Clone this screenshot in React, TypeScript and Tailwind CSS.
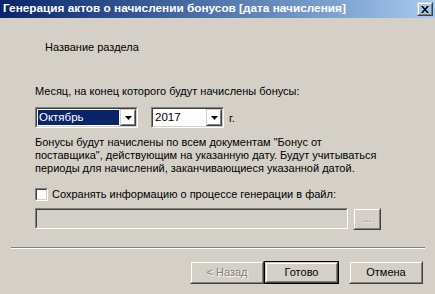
import React from "react";

const font = { fontFamily: '"Liberation Sans", Arial, sans-serif' };

function Sunken({ className = "", children }: { className?: string; children?: React.ReactNode }) {
  return (
    <div className={`border border-t-[#808080] border-l-[#808080] border-b-white border-r-white ${className}`}>
      <div className="h-full w-full border border-t-[#404040] border-l-[#404040] border-b-[#d4d0c8] border-r-[#d4d0c8]">
        {children}
      </div>
    </div>
  );
}

function Raised({ className = "", children }: { className?: string; children?: React.ReactNode }) {
  return (
    <div className={`shrink-0 border border-t-[#d4d0c8] border-l-[#d4d0c8] border-b-[#404040] border-r-[#404040] ${className}`}>
      <div className="flex h-full w-full items-center justify-center border border-t-white border-l-white border-b-[#808080] border-r-[#808080]">
        {children}
      </div>
    </div>
  );
}

function Arrow() {
  return (
    <svg width="7" height="4" viewBox="0 0 7 4">
      <path d="M0 0h7L3.5 4z" fill="#000" />
    </svg>
  );
}

function Combo({ value, width, selected }: { value: string; width: string; selected?: boolean }) {
  return (
    <Sunken className={`h-[21px] ${width}`}>
      <div className="flex h-full bg-white">
        <div className="flex-1 p-[1px]">
          <div
            className={`flex h-full items-center pl-[1px] text-[11.5px] ${
              selected ? "bg-[#0a246a] text-white" : "text-black"
            }`}
          >
            {value}
          </div>
        </div>
        <Raised className="h-[17px] w-[16px]">
          <Arrow />
        </Raised>
      </div>
    </Sunken>
  );
}

function Button({ label, primary, disabled }: { label: string; primary?: boolean; disabled?: boolean }) {
  const inner = (
    <Raised className="h-full w-full">
      <span
        className={`text-[11px] ${disabled ? "text-[#808080] [text-shadow:1px_1px_0_#fff]" : "text-black"}`}
      >
        {label}
      </span>
    </Raised>
  );
  return primary ? (
    <div className="h-[23px] w-[75px] border border-black">{inner}</div>
  ) : (
    <div className="h-[23px] w-[74px]">{inner}</div>
  );
}

export default function App() {
  return (
    <div className="flex h-[294px] w-[435px] flex-col overflow-hidden bg-[#d4d0c8] text-black" style={font}>
      <div className="flex h-[18px] items-center justify-between bg-gradient-to-r from-[#0a246a] to-[#a6caf0] pl-[3px] pr-[2px]">
        <span className="whitespace-nowrap text-[11.8px] font-bold text-white">
          Генерация актов о начислении бонусов [дата начисления]
        </span>
        <Raised className="h-[14px] w-[16px]">
          <svg width="8" height="7" viewBox="0 0 8 7">
            <path d="M0 0h2l2 2.5L6 0h2L5 3.5 8 7H6L4 4.5 2 7H0l3-3.5z" fill="#000" />
          </svg>
        </Raised>
      </div>

      <div className="flex flex-col pl-[35px] pt-[23px] text-[11px] leading-[13px]">
        <p className="ml-[10px]">Название раздела</p>

        <p className="mt-[31px]">Месяц, на конец которого будут начислены бонусы:</p>

        <div className="mt-[9px] flex items-center">
          <Combo value="Октябрь" width="w-[103px]" selected />
          <div className="ml-[13px]">
            <Combo value="2017" width="w-[73px]" />
          </div>
          <span className="ml-[5px] mt-[2px]">г.</span>
        </div>

        <p className="mt-[8px] whitespace-nowrap">
          Бонусы будут начислены по всем документам "Бонус от
          <br />
          поставщика", действующим на указанную дату. Будут учитываться
          <br />
          периоды для начислений, заканчивающиеся указанной датой.
        </p>

        <div className="mt-[13px] flex items-center">
          <div className="h-[13px] w-[13px] border border-t-[#808080] border-l-[#808080] border-b-white border-r-white">
            <div className="h-full w-full border border-t-[#404040] border-l-[#404040] border-b-[#d4d0c8] border-r-[#d4d0c8] bg-white" />
          </div>
          <span className="ml-[4px]">Сохранять информацию о процессе генерации в файл:</span>
        </div>

        <div className="mt-[7px] flex items-start">
          <Sunken className="h-[21px] w-[313px]" />
          <Raised className="ml-[5px] h-[22px] w-[28px]">
            <span className="text-[10px] leading-none text-[#808080] [text-shadow:1px_1px_0_#fff]">...</span>
          </Raised>
        </div>
      </div>

      <div className="ml-[11px] mt-[17px] w-[414px] border-t border-b border-t-[#808080] border-b-white" />

      <div className="ml-[190px] mt-[12px] flex">
        <Button label="< Назад" disabled />
        <Button label="Готово" primary />
        <div className="ml-[10px]">
          <Button label="Отмена" />
        </div>
      </div>
    </div>
  );
}
